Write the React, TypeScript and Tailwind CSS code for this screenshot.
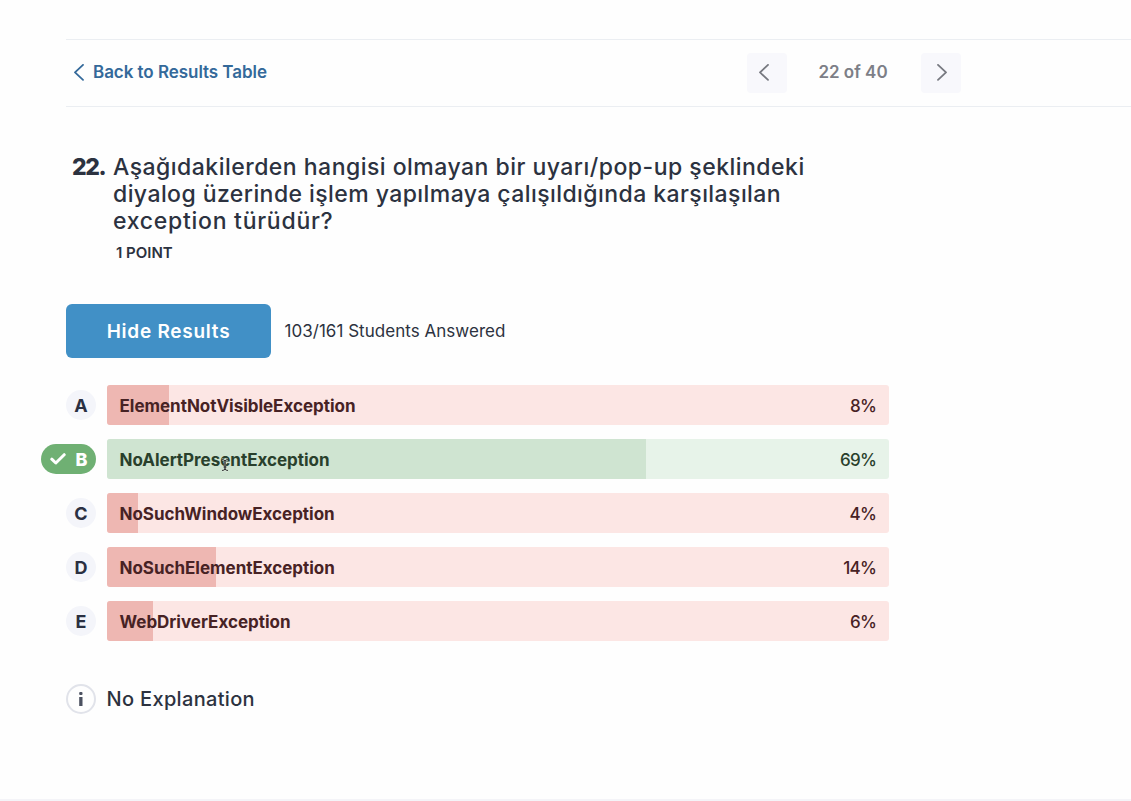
type Answer = { letter: string; label: string; percent: number; correct?: boolean };

const answers: Answer[] = [
  { letter: 'A', label: 'ElementNotVisibleException', percent: 8 },
  { letter: 'B', label: 'NoAlertPresentException', percent: 69, correct: true },
  { letter: 'C', label: 'NoSuchWindowException', percent: 4 },
  { letter: 'D', label: 'NoSuchElementException', percent: 14 },
  { letter: 'E', label: 'WebDriverException', percent: 6 },
];

function Chevron({ direction, className }: { direction: 'left' | 'right'; className: string }) {
  return (
    <svg viewBox="0 0 12 18" fill="none" stroke="currentColor" strokeLinecap="round" strokeLinejoin="round" className={className}>
      <path d={direction === 'left' ? 'M10 .9 2 8.4l8 7.5' : 'M2 .9 10 8.4l-8 7.5'} strokeWidth="1.8" />
    </svg>
  );
}

function TextCursor() {
  return (
    <svg viewBox="0 0 8 14" fill="none" className="absolute left-[114px] top-[19px] h-3.5 w-2">
      <path d="M1 1.5q3 0 3 2v7q0 2-3 2M7 1.5q-3 0-3 2v7q0 2 3 2M2.5 9h3" stroke="#dcebdd" strokeWidth="2.2" />
      <path d="M1 1.5q3 0 3 2v7q0 2-3 2M7 1.5q-3 0-3 2v7q0 2 3 2M2.5 9h3" stroke="#333" strokeWidth="1" />
    </svg>
  );
}

function AnswerRow({ letter, label, percent, correct }: Answer) {
  return (
    <li className="flex h-10 items-center">
      <div className="flex w-[55px] justify-end">
        {correct ? (
          <span className="flex h-[30px] w-[55px] items-center justify-between rounded-full bg-[#6fb073] pl-[9px] pr-[8.5px] text-[18px] font-extrabold text-white">
            <svg viewBox="0 0 16 12" fill="none" stroke="currentColor" strokeLinecap="round" strokeLinejoin="round" className="h-3 w-4">
              <path d="m1.8 6.2 4 3.8L14.2 1.7" strokeWidth="3" />
            </svg>
            {letter}
          </span>
        ) : (
          <span className="flex size-[30px] items-center justify-center rounded-full bg-[#f4f5fa] text-[18px] font-bold text-[#2a3042]">
            {letter}
          </span>
        )}
      </div>
      <div
        className={
          correct
            ? 'relative ml-[10.5px] flex h-10 w-[782.5px] items-center justify-between overflow-hidden rounded-[3px] bg-[#e7f3e9] pl-[13px] pr-[13px] pt-[3px] text-[#29402c]'
            : 'relative ml-[10.5px] flex h-10 w-[782.5px] items-center justify-between overflow-hidden rounded-[3px] bg-[#fce6e4] pl-[13px] pr-[13px] pt-[3px] text-[#472224]'
        }
      >
        <div
          className={correct ? 'absolute inset-y-0 left-0 bg-[#cfe4d1]' : 'absolute inset-y-0 left-0 bg-[#eeb7b2]'}
          style={{ width: `${percent}%` }}
        />
        <span className="relative text-[17px] font-bold tracking-[-0.02px]">{label}</span>
        <span className="relative text-[17px] font-medium tracking-[-0.8px]">{percent}%</span>
        {correct && <TextCursor />}
      </div>
    </li>
  );
}

export default function App() {
  return (
    <div className="flex h-[801px] w-full flex-col overflow-hidden border-b-2 border-[#f4f4f8] bg-[#fefefe] font-['Inter',sans-serif] text-[#2c3240]">
      <nav className="ml-[66px] mt-[39px] flex h-[68px] shrink-0 items-center border-y border-[#ebeef2]">
        <a href="#" className="flex w-[681px] items-center pl-[7px] text-[17px] font-semibold text-[#34699a]">
          <Chevron direction="left" className="mr-2 h-[18px] w-3" />
          <span className="tracking-[-0.05px]">Back to Results Table</span>
        </a>
        <button className="flex h-10 w-10 items-center justify-center rounded-sm bg-[#f8f8fc] pr-1.5 text-[#777980]">
          <Chevron direction="left" className="h-[18px] w-3" />
        </button>
        <span className="w-[134px] pr-0.5 text-center text-[17px] font-semibold text-[#7d7f87]">22 of 40</span>
        <button className="flex h-10 w-10 items-center justify-center rounded-sm bg-[#f8f8fc] pl-0.5 text-[#777980]">
          <Chevron direction="right" className="h-[18px] w-3" />
        </button>
      </nav>

      <main className="flex flex-col pl-[41px]">
        <section className="mt-[47px] flex pl-[31px] text-[23px] leading-[27px]">
          <span className="w-[41px] shrink-0 font-extrabold tracking-[-1.4px]">22.</span>
          <h1 className="whitespace-nowrap font-medium">
            <span className="block tracking-[0.48px]">Aşağıdakilerden hangisi olmayan bir uyarı/pop-up şeklindeki</span>
            <span className="block tracking-[0.43px]">diyalog üzerinde işlem yapılmaya çalışıldığında karşılaşılan</span>
            <span className="block tracking-[0.73px]">exception türüdür?</span>
          </h1>
        </section>
        <p className="ml-[75px] mt-2 text-[15px] font-semibold leading-5">1 POINT</p>

        <div className="ml-[25px] mt-[41px] flex items-center">
          <button className="h-[54px] w-[205px] rounded-md bg-[#4190c6] pt-0.5 text-[19px] font-semibold tracking-[0.75px] text-white">Hide Results</button>
          <span className="ml-[13.5px] pt-0.5 text-[17px] tracking-[0.03px]">103/161 Students Answered</span>
        </div>

        <ul className="mt-[27px] flex flex-col gap-3.5">
          {answers.map((answer) => (
            <AnswerRow key={answer.letter} {...answer} />
          ))}
        </ul>

        <div className="ml-[25px] mt-[43px] flex items-center">
          <span className="flex size-[30px] items-center justify-center rounded-full border-2 border-[#e1e3ea]">
            <svg viewBox="0 0 6 14" fill="#4b5160" className="h-3.5 w-1.5">
              <rect x="1.2" y="0" width="3.3" height="3" rx="1" />
              <path d="M1.2 5h3.3v9H1.2z" />
            </svg>
          </span>
          <span className="ml-[10.5px] text-[20px] font-medium tracking-[0.33px]">No Explanation</span>
        </div>
      </main>
    </div>
  );
}
